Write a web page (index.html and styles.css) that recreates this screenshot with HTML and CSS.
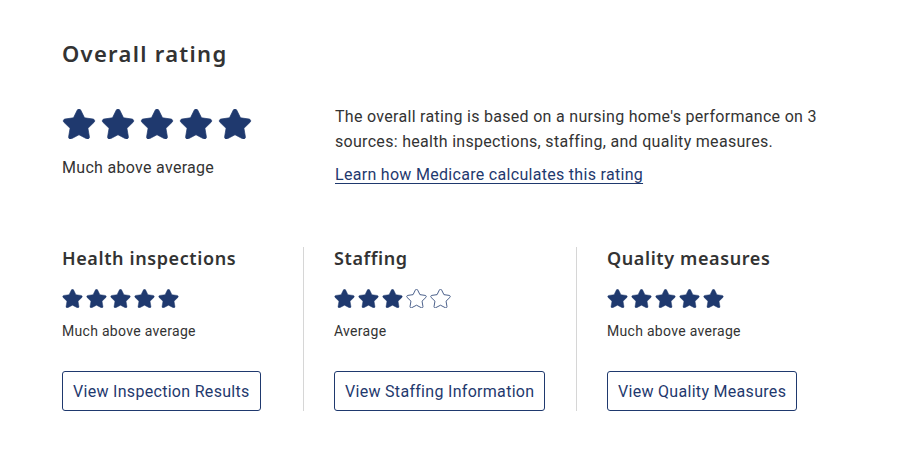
FILE: index.html
```html
<!DOCTYPE html>
<html lang="en">
<head>
  <meta charset="UTF-8" />
  <meta name="viewport" content="width=device-width, initial-scale=1" />
  <title>Overall rating</title>
  <link rel="stylesheet" href="styles.css">
</head>
<body>
  <svg width="0" height="0" class="defs">
    <defs>
      <path id="star" d="M259.3 17.8L194 150.2 47.9 171.5c-26.2 3.8-36.7 36.1-17.7 54.6l105.7 103-25 145.5c-4.5 26.3 23.2 46 46.4 33.7L288 439.6l130.7 68.7c23.2 12.2 50.9-7.4 46.4-33.7l-25-145.5 105.7-103c19-18.5 8.5-50.8-17.7-54.6L382 150.2 316.7 17.8c-11.7-23.6-45.6-23.9-57.4 0z" />
    </defs>
  </svg>

  <div class="rating">
    <h1>Overall rating</h1>

    <div class="overall">
      <div class="overall-score">
        <div class="stars stars-lg">
          <svg viewBox="0 0 576 512"><use href="#star" /></svg>
          <svg viewBox="0 0 576 512"><use href="#star" /></svg>
          <svg viewBox="0 0 576 512"><use href="#star" /></svg>
          <svg viewBox="0 0 576 512"><use href="#star" /></svg>
          <svg viewBox="0 0 576 512"><use href="#star" /></svg>
        </div>
        <p class="label-lg">Much above average</p>
      </div>
      <div class="overall-info">
        <p>The overall rating is based on a nursing home's performance on 3 sources: health inspections, staffing, and quality measures.</p>
        <a href="#">Learn how Medicare calculates this rating</a>
      </div>
    </div>

    <div class="categories">
      <div class="category">
        <h2>Health inspections</h2>
        <div class="stars">
          <svg viewBox="0 0 576 512"><use href="#star" /></svg>
          <svg viewBox="0 0 576 512"><use href="#star" /></svg>
          <svg viewBox="0 0 576 512"><use href="#star" /></svg>
          <svg viewBox="0 0 576 512"><use href="#star" /></svg>
          <svg viewBox="0 0 576 512"><use href="#star" /></svg>
        </div>
        <p class="label">Much above average</p>
        <button type="button">View Inspection Results</button>
      </div>

      <div class="category">
        <h2>Staffing</h2>
        <div class="stars">
          <svg viewBox="0 0 576 512"><use href="#star" /></svg>
          <svg viewBox="0 0 576 512"><use href="#star" /></svg>
          <svg viewBox="0 0 576 512"><use href="#star" /></svg>
          <svg viewBox="0 0 576 512" class="empty"><use href="#star" /></svg>
          <svg viewBox="0 0 576 512" class="empty"><use href="#star" /></svg>
        </div>
        <p class="label">Average</p>
        <button type="button">View Staffing Information</button>
      </div>

      <div class="category">
        <h2>Quality measures</h2>
        <div class="stars">
          <svg viewBox="0 0 576 512"><use href="#star" /></svg>
          <svg viewBox="0 0 576 512"><use href="#star" /></svg>
          <svg viewBox="0 0 576 512"><use href="#star" /></svg>
          <svg viewBox="0 0 576 512"><use href="#star" /></svg>
          <svg viewBox="0 0 576 512"><use href="#star" /></svg>
        </div>
        <p class="label">Much above average</p>
        <button type="button">View Quality Measures</button>
      </div>
    </div>
  </div>
</body>
</html>
```

FILE: styles.css
```css
body {
  margin: 0;
  background: #fff;
  color: #333;
  font-family: Roboto, "Open Sans", Arial, sans-serif;
  letter-spacing: 0.3px;
}
.defs {
  position: absolute;
}
.rating {
  padding: 38px 17px 0 62px;
}
h1 {
  margin: 0;
  font-family: "Noto Sans", sans-serif;
  font-size: 22px;
  line-height: 30px;
  font-weight: 600;
  letter-spacing: 1.3px;
  color: #333;
}
.overall {
  display: flex;
  margin-top: 36px;
}
.overall-score {
  width: 273px;
  padding-top: 5px;
}
.stars {
  display: flex;
  gap: 3px;
  height: 19px;
}
.stars svg {
  width: 21px;
  height: 19px;
  fill: #1f396e;
  stroke: #1f396e;
  stroke-width: 12;
}
.stars svg.empty {
  fill: #fff;
  stroke-width: 22;
}
.stars-lg {
  gap: 5px;
  height: 30px;
}
.stars-lg svg {
  width: 34px;
  height: 30px;
}
.label-lg {
  margin: 19px 0 0;
  font-size: 16px;
  line-height: 20px;
}
.overall-info {
  width: 500px;
}
.overall-info p {
  margin: 0;
  font-size: 16px;
  line-height: 25px;
}
.overall-info a {
  display: inline-block;
  margin-top: 8px;
  font-size: 16px;
  line-height: 25px;
  color: #1f396e;
  text-underline-offset: 3px;
}
.categories {
  display: grid;
  grid-template-columns: 241px 273px 1fr;
  margin-top: 60px;
}
.category {
  padding: 0 30px;
  border-left: 1px solid #d6d6d6;
}
.category:first-child {
  padding-left: 0;
  border-left: none;
}
h2 {
  margin: 0;
  font-family: "Noto Sans", sans-serif;
  font-size: 18px;
  line-height: 22px;
  font-weight: 600;
  letter-spacing: 0.6px;
  color: #333;
}
.category .stars {
  margin-top: 20px;
}
.label {
  margin: 14px 0 0;
  font-size: 14px;
  line-height: 18px;
}
button {
  margin-top: 31px;
  height: 40px;
  padding: 0 10px;
  background: #fff;
  border: 1px solid #1f396e;
  border-radius: 3px;
  color: #1f396e;
  font-family: inherit;
  font-size: 16px;
  letter-spacing: 0.3px;
  cursor: pointer;
}
```
